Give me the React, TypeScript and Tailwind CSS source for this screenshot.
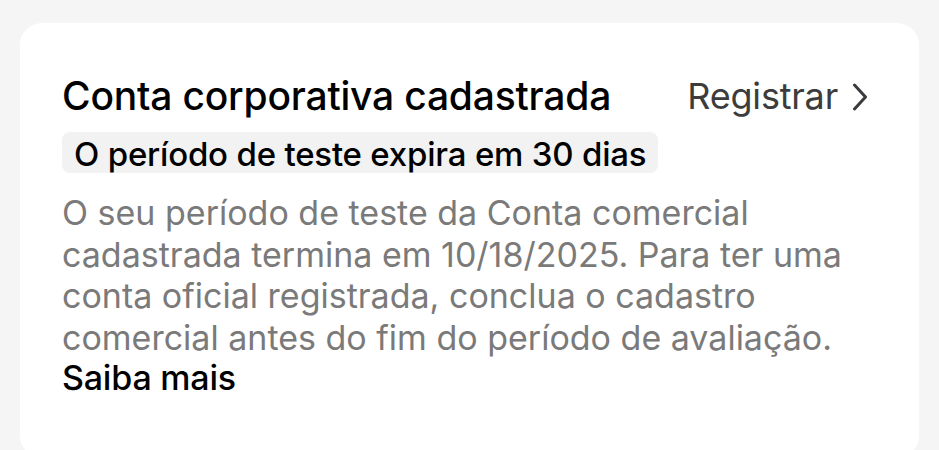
const Chevron = () => (
  <svg width="16" height="28" viewBox="0 0 16 28" fill="none" className="mt-[2px]">
    <polyline
      points="2.5,2 13.5,14 2.5,26"
      stroke="#3a3a3f"
      strokeWidth="3"
      strokeLinecap="round"
      strokeLinejoin="round"
    />
  </svg>
);

const TrialCard = () => {
  return (
    <div className="mx-[20px] mt-[23px] rounded-[22px] bg-white pl-[42px] pr-[51px] pt-[49px] pb-[60px]">
      <div className="flex items-center justify-between">
        <h1 className="text-[39px] leading-[48px] font-medium tracking-[-0.2px] text-black">
          Conta corporativa cadastrada
        </h1>
        <div className="flex items-center gap-[14px] text-[#3c3c3c]">
          <span className="text-[36px] leading-[48px] tracking-[-0.2px]">Registrar</span>
          <Chevron />
        </div>
      </div>
      <div className="mt-[12px] inline-block rounded-[8px] bg-[#f2f2f2] px-[12px] pt-[3px] text-[33px] leading-[38px] font-medium tracking-[-0.2px] text-black">
        O período de teste expira em 30 dias
      </div>
      <p className="mt-[19px] text-[34px] leading-[41.5px] text-[#7a7a7a]">
        O seu período de teste da Conta comercial
        <br />
        cadastrada termina em 10/18/2025. Para ter uma
        <br />
        conta oficial registrada, conclua o cadastro
        <br />
        comercial antes do fim do período de avaliação.
      </p>
      <div className="text-[34px] leading-[40px] font-medium tracking-[-0.2px] text-black">Saiba mais</div>
    </div>
  );
};

export default function App() {
  return (
    <div className="h-[450px] w-[939px] overflow-hidden bg-[#f5f5f5] [font-family:Inter,'Liberation_Sans',sans-serif]">
      <TrialCard />
    </div>
  );
}
